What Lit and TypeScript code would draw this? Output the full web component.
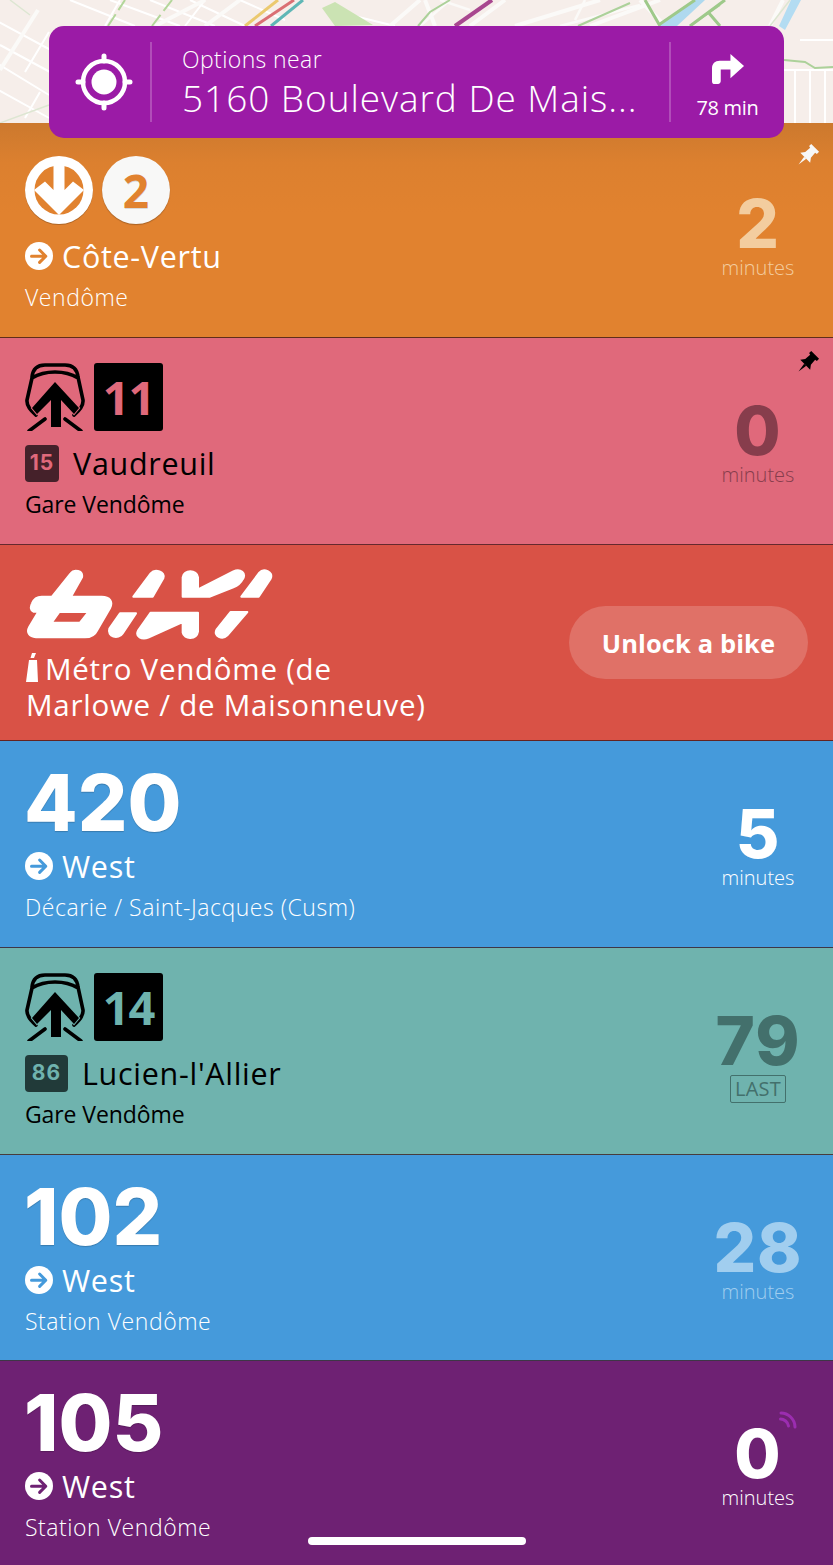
import { LitElement, html, css, svg, nothing } from "lit";
import { customElement } from "lit/decorators.js";

type Row = {
  h: number; bg: string; ink: string; top?: number;
  kind: "metro" | "train" | "bus";
  num?: string; tile?: string; badge?: string; badgeW?: number; badgeInk?: string; badgeBg?: string;
  dest: string; sub: string; eta: string; etaColor: string; unit: string;
  pin?: "white" | "black"; live?: boolean; shade?: boolean;
};

const rows: Row[] = [
  { h: 214, bg: "#E1822F", ink: "#fff", top: 33, kind: "metro", dest: "Côte-Vertu", sub: "Vendôme", eta: "2", etaColor: "#F3CD9F", unit: "minutes", pin: "white", shade: true },
  { h: 206, bg: "#E0697B", ink: "#000", kind: "train", tile: "11", badge: "15", badgeW: 34, badgeBg: "#45212A", badgeInk: "#E0697B", dest: "Vaudreuil", sub: "Gare Vendôme", eta: "0", etaColor: "#873D4C", unit: "minutes", pin: "black" },
];
const rowsAfter: Row[] = [
  { h: 206, bg: "#459ADB", ink: "#fff", kind: "bus", num: "420", dest: "West", sub: "Décarie / Saint-Jacques (Cusm)", eta: "5", etaColor: "#fff", unit: "minutes" },
  { h: 206, bg: "#6FB3AE", ink: "#000", kind: "train", tile: "14", badge: "86", badgeW: 43, badgeBg: "#213A39", badgeInk: "#6FB3AE", dest: "Lucien-l'Allier", sub: "Gare Vendôme", eta: "79", etaColor: "#43706C", unit: "LAST" },
  { h: 205, bg: "#459ADB", ink: "#fff", kind: "bus", num: "102", dest: "West", sub: "Station Vendôme", eta: "28", etaColor: "#A1CEEF", unit: "minutes" },
  { h: 204, bg: "#6E2173", ink: "#fff", kind: "bus", num: "105", dest: "West", sub: "Station Vendôme", eta: "0", etaColor: "#fff", unit: "minutes", live: true },
];

const mapLayer = svg`
  <rect width="833" height="123" fill="#F6EEEA"/>
  <g stroke="#FFFFFF" stroke-width="2" fill="none">
    <path d="M-5 20 L60 55 M0 45 L50 72 M-5 62 L49 95 M-5 88 L49 118 M70 0 L135 26 M110 0 L180 26 M150 0 L215 26 M190 0 L245 26 M240 0 L285 20 M330 10 L395 26"/>
    <path d="M49 32 L25 72 M40 92 L25 118 M120 0 L105 26 M205 0 L185 26 M784 70 H833 M795 70 V123 M810 70 V123 M825 70 V123 M800 40 H833"/>
  </g>
  <g stroke="#FBFAF8" fill="none">
    <path stroke-width="4" d="M38 10 L0 70 M205 26 L240 0 M155 26 L205 0 M390 26 L420 0 M470 26 L505 0 M515 26 L600 0 M590 26 L660 0 M640 0 L665 26 M435 26 L425 0 M770 26 L783 0"/>
    <path stroke-width="2.500" d="M420 26 L450 0 M560 26 L640 5 M575 20 L585 0 M470 10 L440 0"/>
  </g>
  <g stroke="#DDE6D2" stroke-width="1.5" fill="none"><path d="M0 123 L49 105 M10 0 L30 15 M770 26 L790 0"/></g>
  <g stroke="#B3D69A" stroke-width="2" fill="none" stroke-dasharray="14 5">
    <path d="M108 26 L125 0 M152 26 L172 0"/>
  </g>
  <path d="M322 8 L335 2 L373 25 L335 26 Z" fill="#CBE3B3"/>
  <g stroke="#ACD19A" stroke-width="2" fill="none">
    <path d="M418 26 L430 12 L450 0 M578 26 L630 3 M690 26 L720 5"/>
    <path d="M784 60 L805 62 L815 68 L833 67"/>
  </g>
  <path d="M658 26 L695 0 L705 0 L677 26 Z" fill="#AFD9EF"/>
  <path d="M779 26 L791 0 L801 0 L785 30 Z" fill="#B3DCF2"/>
  <g stroke="#9EC98A" stroke-width="3" fill="none">
    <path d="M645 0 L660 26 M660 24 L695 0 M690 26 L725 0 M708 12 L720 26"/>
  </g>
  <g stroke-width="3" fill="none">
    <path d="M245 26 L278 0" stroke="#EBC96F"/>
    <path d="M255 26 L294 0" stroke="#DA6F74"/>
    <path d="M271 26 L303 0" stroke="#5FB7B6"/>
  </g>
  <path d="M455 26 L492 0" stroke="#A8478F" stroke-width="4" fill="none"/>
`;

const arrow = html`<svg class="dir" viewBox="0 0 28 28"><circle cx="14" cy="14" r="14" fill="#fff"/><path class="cut" d="M6.5 14.2 H20 M14.6 8 L20.8 14.2 L14.6 20.4"/></svg>`;

const metroLogo = html`<svg class="disc" viewBox="-34 -34 68 70"><circle r="34" cy="1" class="shadow"/><circle r="34" fill="#fff"/><circle r="24.5" class="hole"/><path fill="#fff" d="M-5.5 -27 V0 L-14 -8.5 L-25 0 L0 25 L25 0 L14 -8.5 L5.5 0 V-27 Z"/></svg>`;

const trainLogo = html`<svg class="train" viewBox="0 0 60 68">
  <path class="line" d="M7 14 C8 5 13 2 20 2 H40 C47 2 52 5 53 14 L58 37 C58.5 42 55 47 49 52 M53 15 C40 7 20 7 7 15 L2 37 C1.500 42 5 47 11 52"/>
  <path class="gap" d="M30 19 L54 45 L49 51 L36 37 V64 H26 V37 L12 51 L7 45 Z"/>
  <path class="line" d="M20 56 L4 68 M40 56 L56 68"/>
</svg>`;

const bixiLogo = html`<svg class="bixi" viewBox="78 34 744 216"><g fill="#fff" stroke="#fff" stroke-width="6" stroke-linejoin="round">
  <path fill-rule="evenodd" d="M212 50 C222 36 250 42 246 62 L213 120 H305 C330 120 340 135 330 155 L292 220 C285 235 270 242 255 242 H108 C88 240 78 228 88 210 L115 165 H100 C92 162 90 152 96 140 C102 125 110 120 125 120 H156 Z M178 166 L155 198 H240 L265 166 Z"/>
  <path d="M400 120 L452 50 C465 35 498 45 490 65 L458 120 Z"/>
  <path d="M360 170 H408 L368 230 C355 250 320 240 328 216 Z"/>
  <path d="M548 120 V62 C550 38 592 38 594 62 V98 L700 44 C722 34 740 50 728 68 C722 80 710 88 700 92 L630 120 Z"/>
  <path d="M414 222 L452 168 H594 V225 C590 250 552 250 548 228 V196 L445 243 C425 250 405 240 414 222 Z"/>
  <path d="M724 120 L778 48 C790 34 822 44 812 66 L776 120 Z"/>
  <path d="M692 166 H742 L682 236 C668 250 638 240 650 218 Z"/>
</g></svg>`;

const pin = (c: string, cls: string) => html`<svg class="pin ${cls}" viewBox="0 0 24 24"><g fill="${c}" transform="rotate(45 12 12)"><path d="M6.500 0.500 H17.500 V3.500 L15.500 4 L16 10.500 L19 14.500 H5 L8 10.500 L8.500 4 L6.500 3.500 Z"/><path d="M10.500 14.500 H13.500 L12 24 Z"/></g></svg>`;

const wifi = html`<svg class="wifi" viewBox="0 0 18 18" fill="none" stroke="#9B2DB0" stroke-width="3" stroke-linecap="round"><path d="M2 2 C9 2 16 8 16 16"/><path d="M1.500 8 C5 8 9 11 9.500 15"/></svg>`;

@customElement("app-root")
export class AppRoot extends LitElement {
  static styles = css`
    :host { display: block; width: 833px; height: 1565px; overflow: hidden; position: relative; font-family: "Open Sans", "Noto Sans", sans-serif; }
    .map { display: block; width: 833px; height: 123px; }
    .card { position: absolute; left: 49px; top: 26px; width: 735px; height: 112px; box-sizing: border-box; display: flex; align-items: stretch; background: #9B1BA6; border-radius: 15px; color: #fff; padding: 16px 0; z-index: 2; }
    .locate { width: 103px; flex: none; display: flex; align-items: center; justify-content: center; border-right: 2px solid rgba(255,255,255,.22); box-sizing: border-box; }
    .locate svg { width: 58px; height: 58px; display: block; margin-left: 9px; }
    .where { flex: 1; min-width: 0; padding-left: 30px; display: flex; flex-direction: column; }
    .near { font-size: 23px; line-height: 34px; font-weight: 300; letter-spacing: .4px; }
    .addr { font-size: 37px; line-height: 44px; font-weight: 300; white-space: nowrap; letter-spacing: .95px; margin-top: 0; }
    .route { width: 115px; flex: none; border-left: 2px solid rgba(255,255,255,.22); box-sizing: border-box; display: flex; flex-direction: column; align-items: center; }
    .route svg { width: 33px; height: 33px; display: block; margin-top: 11px; margin-left: 2px; }
    .route span { font-size: 20px; line-height: 26px; margin-top: 9px; letter-spacing: -.3px; }

    .row { display: flex; justify-content: space-between; align-items: flex-start; box-sizing: content-box; padding: 25px 25px 0; border-bottom: 1px solid rgba(60,20,20,.75); position: relative; background: var(--bg); color: var(--ink); }
    .row:last-of-type { border-bottom: 0; }
    .row.shade { background: linear-gradient(#CC792E, #DC802F 40px, #E1822F 90px); }
    .row.tall { padding-top: 33px; }
    .head { height: 68px; display: flex; align-items: flex-start; }
    .disc { width: 68px; height: 70px; display: block; flex: none; }
    .shadow { fill: rgba(0,0,0,.22); }
    .hole { fill: var(--bg); }
    .discNum { width: 68px; height: 68px; margin-left: 9px; border-radius: 50%; background: #f8f8f7; box-shadow: 0 1px 1px rgba(0,0,0,.25); color: var(--bg); font-family: "Open Sans", sans-serif; font-size: 46px; font-weight: 700; display: flex; align-items: center; justify-content: center; text-shadow: 0 1px 0 rgba(0,0,0,.15); }
    .train { width: 60px; height: 68px; display: block; margin-right: 9px; flex: none; }
    .line { fill: none; stroke: #000; stroke-width: 3.6; stroke-linecap: round; }
    .gap { fill: #000; stroke: var(--bg); stroke-width: 2; paint-order: stroke; }
    .tile { width: 69px; height: 68px; border-radius: 3px; background: #000; color: var(--bg); font-family: "Open Sans", sans-serif; font-size: 47px; font-weight: 700; display: flex; align-items: center; justify-content: center; letter-spacing: -1px; }
    .big { font-family: Inter, sans-serif; font-weight: 800; font-size: 78px; line-height: 68px; letter-spacing: 0; text-shadow: 0 1px 1px rgba(0,0,0,.2); margin: 3px 0 0 -1px; height: 65px; }
    .dest { height: 36px; margin-top: 14px; display: flex; align-items: center; gap: 9px; font-size: 30.5px; line-height: 36px; letter-spacing: .7px; white-space: nowrap; }
    .dir { width: 28px; height: 28px; display: block; flex: none; }
    .cut { fill: none; stroke: var(--bg); stroke-width: 3; stroke-linecap: round; stroke-linejoin: round; }
    .badge { height: 37px; border-radius: 4px; box-sizing: border-box; display: flex; align-items: center; justify-content: center; font-family: Inter, sans-serif; font-size: 21px; font-weight: 700; letter-spacing: 1px; margin-right: 5px; background: var(--bbg); color: var(--bink); }
    .sub { font-size: 23px; line-height: 28px; margin-top: 9px; font-weight: 300; white-space: nowrap; letter-spacing: .55px; }
    .dark .sub { font-weight: 400; letter-spacing: -.1px; }
    .eta { width: 100px; margin-top: 39px; display: flex; flex-direction: column; align-items: center; color: var(--eta); }
    .etaNum { font-family: Inter, sans-serif; font-weight: 800; font-size: 67px; line-height: 58px; letter-spacing: 1px; }
    .etaUnit { font-size: 20px; line-height: 24px; margin-top: 3px; font-weight: 300; letter-spacing: 0; white-space: nowrap; }
    .last { font-size: 20px; line-height: 26px; height: 28px; width: 56px; box-sizing: border-box; margin-top: 5px; border: 1px solid var(--eta); border-radius: 2px; text-align: center; font-weight: 400; letter-spacing: .2px; }
    .pin { position: absolute; right: 14px; top: 20.5px; width: 24px; height: 24px; display: block; overflow: visible; }
    .pin.black { top: 13px; }
    .wifi { position: absolute; left: 779px; top: 50px; width: 18px; height: 18px; display: block; }

    .bike { height: 172px; padding: 23px 25px 0 26px; background: #D95246; display: flex; justify-content: space-between; color: #fff; border-bottom: 1px solid rgba(60,20,20,.75); }
    .bixi { width: 248px; height: 72px; display: block; }
    .station { font-size: 29.5px; line-height: 36px; margin-top: 11px; letter-spacing: .75px; font-weight: 500; white-space: nowrap; }
    .dock { display: inline-block; vertical-align: -2px; width: 12px; height: 29px; margin-right: 7px; }
    .unlock { align-self: center; margin-top: -23px; width: 239px; height: 73px; border-radius: 37px; background: rgba(255,255,255,.18); display: flex; align-items: center; justify-content: center; font-size: 25.5px; font-weight: 700; letter-spacing: .1px; }
    .home { position: absolute; left: 308px; top: 1537px; width: 218px; height: 8px; border-radius: 4px; background: #fff; z-index: 3; }
  `;

  private renderRow(r: Row) {
    const pad = r.top ?? 25;
    return html`<section
      class="row ${r.top ? "tall" : ""} ${r.shade ? "shade" : ""} ${r.ink === "#000" ? "dark" : ""}"
      style="--bg:${r.bg};--ink:${r.ink};--eta:${r.etaColor};--bbg:${r.badgeBg ?? "none"};--bink:${r.badgeInk ?? "none"};height:${r.h - pad}px">
      <div class="left">
        <div class="head">
          ${r.kind === "metro" ? html`${metroLogo}<div class="discNum">2</div>` : nothing}
          ${r.kind === "train" ? html`${trainLogo}<div class="tile">${r.tile}</div>` : nothing}
          ${r.kind === "bus" ? html`<div class="big">${r.num}</div>` : nothing}
        </div>
        <div class="dest">
          ${r.badge ? html`<span class="badge" style="width:${r.badgeW}px">${r.badge}</span>` : arrow}
          <span>${r.dest}</span>
        </div>
        <div class="sub">${r.sub}</div>
      </div>
      <div class="eta">
        <div class="etaNum">${r.eta}</div>
        ${r.unit === "LAST" ? html`<div class="last">LAST</div>` : html`<div class="etaUnit">${r.unit}</div>`}
      </div>
      ${r.pin ? pin(r.pin === "white" ? "#F7F7F7" : "#000", r.pin) : nothing}
      ${r.live ? wifi : nothing}
    </section>`;
  }

  render() {
    return html`
      <svg class="map" viewBox="0 0 833 123">${mapLayer}</svg>
      <header class="card">
        <div class="locate">
          <svg viewBox="0 0 58 58" fill="none" stroke="#fff"><circle cx="29" cy="29" r="21" stroke-width="4.500"/><circle cx="29" cy="29" r="12.500" fill="#fff" stroke="none"/><path stroke-width="5" stroke-linecap="round" d="M29 3 V8 M29 50 V55 M3 29 H8 M50 29 H55"/></svg>
        </div>
        <div class="where">
          <div class="near">Options near</div>
          <div class="addr">5160 Boulevard De Mais...</div>
        </div>
        <div class="route">
          <svg viewBox="0 0 34 34"><path fill="#fff" d="M3 32 C1 32 0 31 0 29 V16 C0 11 3 8 8 8 H19 V1 L33 13.500 L19 26 V17 H9 V29 C9 31 7 32 5 32 Z"/></svg>
          <span>78 min</span>
        </div>
      </header>
      ${rows.map((r) => this.renderRow(r))}
      <section class="bike">
        <div>
          ${bixiLogo}
          <div class="station"><svg class="dock" viewBox="0 0 12 29"><path fill="#fff" d="M3 7 L11 7 L12 29 L0 29 Z M6 0 L10 0 L8 5 L4.500 5 Z"/></svg>Métro Vendôme (de<br />Marlowe / de Maisonneuve)</div>
        </div>
        <div class="unlock">Unlock a bike</div>
      </section>
      ${rowsAfter.map((r) => this.renderRow(r))}
      <div class="home"></div>
    `;
  }
}
